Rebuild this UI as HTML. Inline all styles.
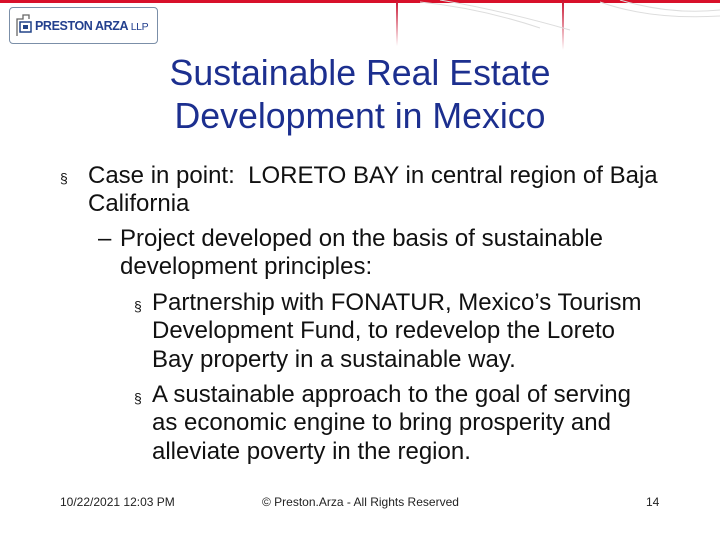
<!DOCTYPE html>
<html><head><meta charset="utf-8"><style>
body{margin:0;width:720px;height:540px;background:#fff;position:relative;overflow:hidden;font-family:"Liberation Sans",sans-serif}
.a{position:absolute;white-space:nowrap}
.t{font-size:35.7px;color:#1c2f8f;width:720px;text-align:center;left:0;line-height:43px}
.b{font-size:24px;color:#111;line-height:28.3px}
.f{font-size:12px;color:#222}
</style></head><body>
<div class="a" style="left:0;top:0;width:720px;height:3px;background:#d8102a"></div>
<div class="a" style="left:396px;top:0;width:2px;height:46px;background:linear-gradient(#c8102e,#fff)"></div>
<div class="a" style="left:562px;top:0;width:2px;height:50px;background:linear-gradient(#c8102e,#fff)"></div>
<svg class="a" style="left:420px;top:0" width="300" height="40"><path d="M0 2 Q60 8 120 28 M20 0 Q80 10 150 30 M180 2 Q230 20 300 16 M200 0 Q250 15 300 10" stroke="#ddd" fill="none"/></svg>
<div class="a" style="left:9px;top:7px;width:147px;height:35px;border:1.5px solid #7b8fa8;border-radius:4px;background:#fff"></div>
<svg class="a" style="left:15px;top:13px" width="20" height="24"><path d="M2 23V6h6V2h6v4" stroke="#666" fill="none" stroke-width="1.3"/><rect x="5" y="9" width="11" height="10" fill="none" stroke="#224488" stroke-width="1.5"/><rect x="8" y="12" width="5" height="4" fill="#224488"/></svg>
<div class="a" style="left:35px;top:19px;font-size:12.5px;font-weight:bold;color:#23408e;letter-spacing:-0.4px">PRESTON ARZA <span style="font-size:10.5px;font-weight:normal">LLP</span></div>
<div class="a t" style="top:52px">Sustainable Real Estate</div>
<div class="a t" style="top:95px">Development in Mexico</div>
<div class="a b" style="left:60px;top:164px;font-size:14px">§</div>
<div class="a b" style="left:88px;top:162px">Case in point:&nbsp; LORETO BAY in central region of Baja<br>California</div>
<div class="a b" style="left:98px;top:225px">–</div>
<div class="a b" style="left:120px;top:225px">Project developed on the basis of sustainable<br>development principles:</div>
<div class="a b" style="left:134px;top:292px;font-size:14px">§</div>
<div class="a b" style="left:152px;top:289px">Partnership with FONATUR, Mexico’s Tourism<br>Development Fund, to redevelop the Loreto<br>Bay property in a sustainable way.</div>
<div class="a b" style="left:134px;top:384px;font-size:14px">§</div>
<div class="a b" style="left:152px;top:381px">A sustainable approach to the goal of serving<br>as economic engine to bring prosperity and<br>alleviate poverty in the region.</div>
<div class="a f" style="left:60px;top:495px">10/22/2021 12:03 PM</div>
<div class="a f" style="left:262px;top:495px">© Preston.Arza - All Rights Reserved</div>
<div class="a f" style="left:646px;top:495px">14</div>
</body></html>
